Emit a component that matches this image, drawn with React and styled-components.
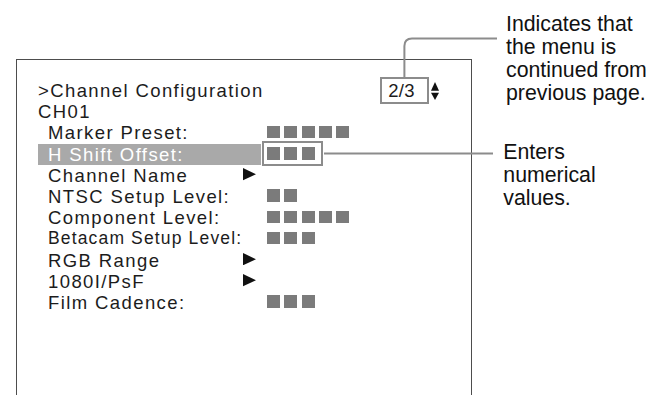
import React from 'react';
import styled, { createGlobalStyle } from 'styled-components';

const GlobalStyle = createGlobalStyle`
  html, body {
    margin: 0;
    padding: 0;
    background: #fff;
    overflow: hidden;
  }
  body {
    font-family: "Liberation Sans", Arial, Helvetica, sans-serif;
    color: #1c1c1c;
  }
`

const Page = styled.div`
  position: relative;
  width: 663px;
  height: 395px;
  overflow: hidden;
  display: flex;
  align-items: flex-start;
`

const Screen = styled.div`
  margin: 59px 0 0 16px;
  width: 455.5px;
  height: 360px;
  box-sizing: border-box;
  border: 1.5px solid #4d4d4d;
  border-bottom: none;
  padding: 20px 32px 0 21px;
`

const TitleRow = styled.div`
  display: flex;
  align-items: center;
  height: 21.2px;
  font-size: 18.5px;
  letter-spacing: 1.4px;
  line-height: 21.2px;
  white-space: nowrap;
`

const PageBox = styled.div`
  margin-left: auto;
  width: 48.7px;
  height: 27.3px;
  box-sizing: border-box;
  border: 2px solid #8c8c8c;
  padding-left: 6px;
  letter-spacing: 0.3px;
  line-height: 23.3px;
`

const Scroll = styled.svg`
  display: block;
  margin-left: 1.6px;
  flex: none;
`

const Line = styled.div`
  height: 21.2px;
  font-size: 18.5px;
  letter-spacing: 1.4px;
  line-height: 21.2px;
  white-space: nowrap;
`

const MenuRow = styled.div`
  display: flex;
  align-items: flex-start;
  height: 21.2px;
  line-height: 21.2px;
  white-space: nowrap;
`

const Item = styled.div`
  display: grid;
  grid-template-columns: 194.8px 13px;
  width: 223px;
  height: 21.2px;
  box-sizing: border-box;
  padding-left: 10px;
  font-size: ${p => (p.$small ? '17.5px' : '18.5px')};
  letter-spacing: ${p => (p.$small ? '1.15px' : '1.4px')};
  background: ${p => (p.$active ? '#a9a9a9' : 'transparent')};
  color: ${p => (p.$active ? '#fff' : '#1c1c1c')};
`

const Arrow = styled.svg`
  display: block;
  margin-top: 3.6px;
`

const Values = styled.div`
  display: flex;
  gap: 4.3px;
  margin-left: 6.2px;
  margin-top: 3.5px;
  ${p => p.$boxed && `
    border: 2px solid #8c8c8c;
    padding: 4.5px 6.7px 4.6px 3.7px;
    margin-top: -3px;
    margin-left: 0.5px;
  `}
`

const Square = styled.span`
  display: block;
  width: 13px;
  height: 12.5px;
  background: #7b7b7b;
`

const Notes = styled.div`
  margin-left: 31.8px;
  display: flex;
  flex-direction: column;
  font-size: 21.3px;
  line-height: 23px;
  color: #111;
`

const Note = styled.div`
  padding-left: ${p => p.$indent || 0}px;
  margin-top: ${p => p.$top}px;
`

const Callouts = styled.svg`
  position: absolute;
  left: 0;
  top: 0;
  pointer-events: none;
`

const rows = [
  { label: 'Marker Preset:', squares: 5 },
  { label: 'H Shift Offset:', squares: 3, active: true },
  { label: 'Channel Name', arrow: true },
  { label: 'NTSC Setup Level:', squares: 2 },
  { label: 'Component Level:', squares: 5 },
  { label: 'Betacam Setup Level:', squares: 3, small: true },
  { label: 'RGB Range', arrow: true },
  { label: '1080I/PsF', arrow: true },
  { label: 'Film Cadence:', squares: 3 },
];

const Blocks = ({ count, boxed }) => (
  <Values $boxed={boxed}>
    {Array.from({ length: count }).map((_, i) => <Square key={i} />)}
  </Values>
);

const App = () => {
  return (
    <>
      <GlobalStyle />
      <Page>
        <Screen>
          <TitleRow>
            <span>&gt;Channel Configuration</span>
            <PageBox>2/3</PageBox>
            <Scroll width="8" height="18" viewBox="0 0 8 18">
              <polygon points="4,0 8,8.7 0,8.7" fill="#111" />
              <polygon points="0,10.7 8,10.7 4,18" fill="#111" />
            </Scroll>
          </TitleRow>
          <Line>CH01</Line>
          {rows.map(r => (
            <MenuRow key={r.label}>
              <Item $active={r.active} $small={r.small}>
                <span>{r.label}</span>
                {r.arrow && (
                  <Arrow width="13" height="12.3" viewBox="0 0 13 12.3">
                    <polygon points="0,0 13,6.15 0,12.3" fill="#111" />
                  </Arrow>
                )}
              </Item>
              {r.squares && <Blocks count={r.squares} boxed={r.active} />}
            </MenuRow>
          ))}
        </Screen>
        <Notes>
          <Note $indent={2.7} $top={13}>
            Indicates that<br />
            the menu is<br />
            continued from<br />
            previous page.
          </Note>
          <Note $top={35.5}>
            Enters<br />
            numerical<br />
            values.
          </Note>
        </Notes>
        <Callouts width="663" height="395" viewBox="0 0 663 395">
          <path d="M404.4 78 V46 Q404.4 38.4 412 38.4 H497" fill="none" stroke="#8c8c8c" strokeWidth="2" />
          <path d="M324 153.4 H493" fill="none" stroke="#8c8c8c" strokeWidth="2" />
        </Callouts>
      </Page>
    </>
  );
}

export default App;
